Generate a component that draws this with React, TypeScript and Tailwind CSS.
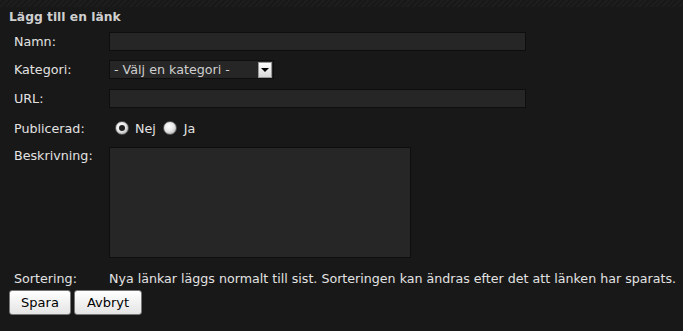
import React from 'react';

const font = { fontFamily: '"DejaVu Sans", Verdana, sans-serif' };

function Radio({ checked }: { checked?: boolean }) {
  return (
    <span className="relative inline-flex h-[14px] w-[14px] items-center justify-center rounded-full border border-[#555] bg-[radial-gradient(circle_at_40%_35%,#ffffff_0,#e8e8e8_45%,#9a9a9a_100%)]">
      {checked && <span className="h-[6px] w-[6px] rounded-full bg-[#222]" />}
    </span>
  );
}

export default function App() {
  return (
    <div className="min-h-[331px] w-[683px] bg-[#181818] text-[12.7px] text-[#e2e2e2]" style={font}>
      {/* striped top edge */}
      <div className="h-[7px] bg-[repeating-linear-gradient(135deg,#1d1d1d_0,#1d1d1d_2px,#181818_2px,#181818_4px)]" />

      <h2 className="pl-[9px] pt-[2px] text-[12.3px] font-bold leading-[16px] text-[#cfcfcf]">Lägg till en länk</h2>

      <div className="mt-[7px] flex flex-col pl-[14px]">
        {/* Namn */}
        <div className="flex h-[19px] items-center">
          <label className="w-[95px]">Namn:</label>
          <div className="h-[19px] w-[417px] border border-[#0e0e0e] bg-[#262626]" />
        </div>

        {/* Kategori */}
        <div className="mt-[9px] flex h-[19px] items-center">
          <label className="w-[95px]">Kategori:</label>
          <div className="flex h-[19px] w-[165px] items-center justify-between border border-[#0e0e0e] bg-[#262626] pl-[4px] pr-[1px] text-[#cfcfcf]">
            <span>- Välj en kategori -</span>
            <span className="flex h-[16px] w-[14px] items-center justify-center border border-[#999] bg-[linear-gradient(#ffffff,#d8d8d8)]">
              <span className="h-0 w-0 border-x-[4px] border-t-[4px] border-x-transparent border-t-black" />
            </span>
          </div>
        </div>

        {/* URL */}
        <div className="mt-[10px] flex h-[19px] items-center">
          <label className="w-[95px]">URL:</label>
          <div className="h-[19px] w-[417px] border border-[#0e0e0e] bg-[#262626]" />
        </div>

        {/* Publicerad */}
        <div className="mt-[11px] flex h-[18px] items-center">
          <label className="w-[95px] self-start">Publicerad:</label>
          <div className="flex items-center pl-[6px]">
            <Radio checked />
            <span className="ml-[6px] mt-[2px]">Nej</span>
            <span className="ml-[7px] flex">
              <Radio />
            </span>
            <span className="ml-[7px] mt-[2px]">Ja</span>
          </div>
        </div>

        {/* Beskrivning */}
        <div className="mt-[10px] flex">
          <label className="w-[95px] pt-[1px] leading-[16px]">Beskrivning:</label>
          <div className="h-[111px] w-[302px] border border-[#0e0e0e] bg-[#262626]" />
        </div>

        {/* Sortering */}
        <div className="mt-[13px] flex whitespace-nowrap leading-[16px]">
          <span className="w-[95px]">Sortering:</span>
          <span className="text-[12.65px]">Nya länkar läggs normalt till sist. Sorteringen kan ändras efter det att länken har sparats.</span>
        </div>
      </div>

      <div className="mt-[3px] flex gap-[3px] pl-[9px]">
        <button className="h-[25px] w-[62px] rounded-[3px] border border-[#777] bg-[linear-gradient(#ffffff,#e4e4e4)] text-[13px] text-black">
          Spara
        </button>
        <button className="h-[25px] w-[68px] rounded-[3px] border border-[#777] bg-[linear-gradient(#ffffff,#e4e4e4)] text-[13px] text-black">
          Avbryt
        </button>
      </div>
    </div>
  );
}
